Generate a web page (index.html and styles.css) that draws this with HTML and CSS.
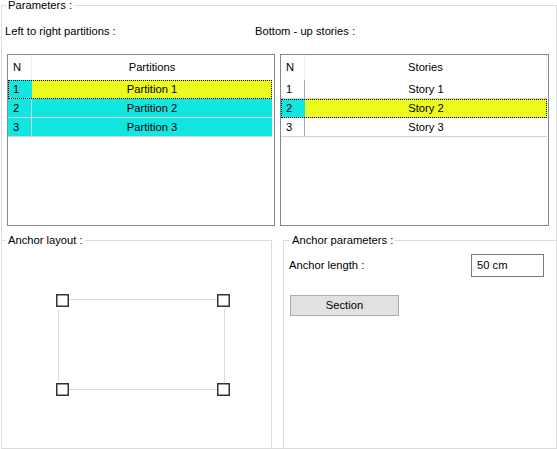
FILE: index.html
```html
<!DOCTYPE html>
<html>
<head>
    <link rel="stylesheet" href="styles.css">
</head>
<body>

<div class="params group">
    <span class="group-title">Parameters :</span>

    <div class="captions">
        <span class="caption caption-left">Left to right partitions :</span>
        <span class="caption">Bottom - up stories :</span>
    </div>

    <div class="lists">
        <div class="list list-left">
            <div class="list-head">
                <div class="cell-n">N</div>
                <div class="cell-name">Partitions</div>
            </div>
            <div class="row sel focus">
                <div class="cell-n">1</div>
                <div class="cell-name">Partition 1</div>
            </div>
            <div class="row cyan">
                <div class="cell-n">2</div>
                <div class="cell-name">Partition 2</div>
            </div>
            <div class="row cyan">
                <div class="cell-n">3</div>
                <div class="cell-name">Partition 3</div>
            </div>
        </div>

        <div class="list list-right">
            <div class="list-head">
                <div class="cell-n">N</div>
                <div class="cell-name">Stories</div>
            </div>
            <div class="row">
                <div class="cell-n">1</div>
                <div class="cell-name">Story 1</div>
            </div>
            <div class="row sel focus">
                <div class="cell-n">2</div>
                <div class="cell-name">Story 2</div>
            </div>
            <div class="row">
                <div class="cell-n">3</div>
                <div class="cell-name">Story 3</div>
            </div>
        </div>
    </div>

    <div class="lower">
        <div class="group layout">
            <span class="group-title">Anchor layout :</span>
            <!-- anchor positions drawn in page coordinates -->
            <svg class="layout-canvas" width="269" height="207" viewBox="2 241 269 207">
                <g stroke="#dadada" stroke-width="1">
                    <line x1="68" y1="299.5" x2="217" y2="299.5"/>
                    <line x1="68" y1="389.5" x2="217" y2="389.5"/>
                    <line x1="58.5" y1="309" x2="58.5" y2="382"/>
                    <line x1="224.5" y1="309" x2="224.5" y2="382"/>
                </g>
                <g fill="#fff" stroke="#333" stroke-width="1.5">
                    <rect x="56.75" y="294.75" width="11.5" height="11.5"/>
                    <rect x="217.75" y="294.75" width="11.5" height="11.5"/>
                    <rect x="56.75" y="383.75" width="11.5" height="11.5"/>
                    <rect x="217.75" y="383.75" width="11.5" height="11.5"/>
                </g>
            </svg>
        </div>

        <div class="group anchor">
            <span class="group-title">Anchor parameters :</span>
            <div class="field-row">
                <label for="anchor_length">Anchor length :</label>
                <input type="text" id="anchor_length" value="50 cm">
            </div>
            <button class="btn">Section</button>
        </div>
    </div>
</div>

</body>
</html>
```

FILE: styles.css
```css
html, body {
    overflow: hidden;
}

body {
    margin: 0;
    font-family: "Liberation Sans", Arial, sans-serif;
    font-size: 11.2px;
    line-height: 13px;
    color: #000;
    background: #fff;
}

.group {
    position: relative;
    box-sizing: border-box;
    border: 1px solid #dcdcdc;
}

.group-title {
    position: absolute;
    top: -7px;
    left: 4px;
    padding: 0 2px;
    background: #fff;
}

.params {
    width: 556px;
    height: 444px;
    margin: 5px 0 0 1px;
}

.captions {
    display: flex;
    margin: 19px 0 0 3px;
}

.caption-left {
    width: 250px;
}

.lists {
    display: flex;
    gap: 5px;
    margin: 16px 0 0 5px;
}

.list {
    box-sizing: border-box;
    height: 172px;
    border: 1px solid #828790;
    padding-right: 2px;
}

.list-left {
    width: 268px;
}

.list-right {
    width: 269px;
    padding-right: 1px;
}

.list-head {
    display: flex;
    height: 25px;
    line-height: 25px;
}

.list-head .cell-n {
    border-right: 1px solid #ececec;
}

.list-right .list-head .cell-name {
    border-right: 1px solid #ececec;
}

.cell-n {
    box-sizing: border-box;
    width: 24px;
    padding-left: 5px;
}

.cell-name {
    flex: 1;
    text-align: center;
}

.row {
    display: flex;
    box-sizing: border-box;
    height: 19px;
    line-height: 18px;
    border-bottom: 1px solid #d2d2d2;
}

.row .cell-n {
    border-right: 1px solid #a9a9a9;
}

.row.cyan .cell-n,
.row.cyan .cell-name {
    background: #12e6e1;
    border-color: #bcdcdc;
}

.row.sel .cell-n {
    background: #12e6e1;
    border-right-color: #12e6e1;
}

.row.sel .cell-name {
    background: #edfa1d;
}

.row.focus {
    outline: 1px dotted #000;
    outline-offset: -1px;
}

.lower {
    display: flex;
    justify-content: space-between;
    margin: 14px -1px 0 -1px;
}

.layout {
    width: 271px;
    height: 209px;
}

.layout-canvas {
    position: absolute;
    left: 0;
    top: 0;
}

.anchor {
    width: 274px;
    height: 209px;
    padding: 13px 12px 0 5px;
}

.anchor .group-title {
    left: 6px;
    padding: 0 1px 0 2px;
}

.field-row {
    display: flex;
    justify-content: space-between;
    align-items: center;
}

.field-row input[type="text"] {
    box-sizing: border-box;
    width: 73px;
    height: 23px;
    padding: 0 5px 2px 5px;
    margin: 0;
    border: 1px solid #7a7a7a;
    font: inherit;
    color: #000;
    outline: none;
}

.btn {
    display: block;
    box-sizing: border-box;
    width: 109px;
    height: 21px;
    margin: 18px 0 0 1px;
    padding: 0;
    background: #e1e1e1;
    border: 1px solid #adadad;
    font: inherit;
    color: #000;
}
```
